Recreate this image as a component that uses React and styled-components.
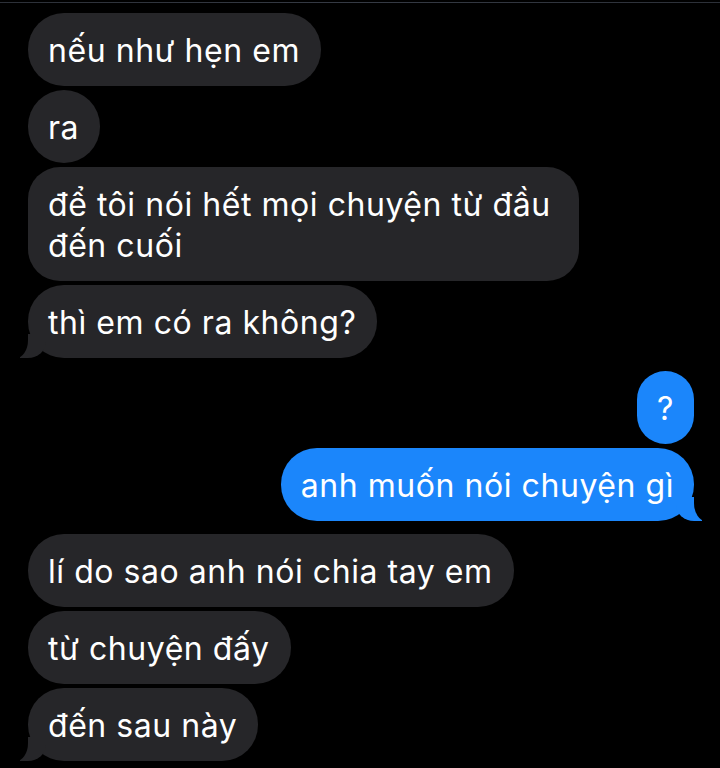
import React from "react";
import styled, { createGlobalStyle, css } from "styled-components";

const GlobalStyle = createGlobalStyle`
  html, body {
    margin: 0;
    padding: 0;
    background: #000;
  }
  body {
    font-family: Inter, "Noto Sans", "Liberation Sans", sans-serif;
    -webkit-font-smoothing: antialiased;
  }
`;

const Screen = styled.div`
  width: 720px;
  height: 768px;
  background: #000;
  overflow: hidden;
  display: flex;
  flex-direction: column;
`;

const TopEdge = styled.div`
  height: 1px;
  margin-top: 2px;
  background: linear-gradient(90deg, #2c3038, #353a44 50%, #2c3038);
`;

const Thread = styled.div`
  display: flex;
  flex-direction: column;
  gap: 13px;
  padding: 10px 26px 0 28px;
`;

const Group = styled.div`
  display: flex;
  flex-direction: column;
  align-items: ${(p) => (p.$mine ? "flex-end" : "flex-start")};
  gap: 4px;
`;

const tailLeft = css`
  &::before {
    content: "";
    position: absolute;
    left: -8px;
    bottom: 0;
    width: 26px;
    height: 24px;
    background: #262629;
    border-bottom-right-radius: 18px 16px;
  }
  &::after {
    content: "";
    position: absolute;
    left: -14px;
    bottom: 0;
    width: 14px;
    height: 26px;
    background: #000;
    border-bottom-right-radius: 12px 18px;
  }
`;

const tailRight = css`
  &::before {
    content: "";
    position: absolute;
    right: -8px;
    bottom: 0;
    width: 26px;
    height: 24px;
    background: #1b86fb;
    border-bottom-left-radius: 18px 16px;
  }
  &::after {
    content: "";
    position: absolute;
    right: -14px;
    bottom: 0;
    width: 14px;
    height: 26px;
    background: #000;
    border-bottom-left-radius: 12px 18px;
  }
`;

const Bubble = styled.div`
  position: relative;
  z-index: 0;
  max-width: 510px;
  padding: 17px 21px 15px 20px;
  border-radius: 36px;
  background: ${(p) => (p.$mine ? "#1b86fb" : "#262629")};
  color: #fff;
  font-size: 32px;
  line-height: 41px;
  letter-spacing: 0.55px;
  ${(p) => p.$multi && "border-radius: 32px;"}
  ${(p) => p.$mine && "padding: 17px 20px 15px 20px;"}
  ${(p) => p.$tail && (p.$mine ? tailRight : tailLeft)}

  span {
    position: relative;
    z-index: 1;
  }
  &::before,
  &::after {
    z-index: -1;
  }
`;

const groups = [
  {
    mine: false,
    messages: [
      "nếu như hẹn em",
      "ra",
      "để tôi nói hết mọi chuyện từ đầu đến cuối",
      "thì em có ra không?",
    ],
  },
  { mine: true, messages: ["?", "anh muốn nói chuyện gì"] },
  {
    mine: false,
    messages: ["lí do sao anh nói chia tay em", "từ chuyện đấy", "đến sau này"],
  },
];

const App = () => {
  return (
    <Screen>
      <GlobalStyle />
      <TopEdge />
      <Thread>
        {groups.map((group, gi) => (
          <Group key={gi} $mine={group.mine}>
            {group.messages.map((text, i) => (
              <Bubble
                key={i}
                $mine={group.mine}
                $multi={text.length > 36}
                $tail={i === group.messages.length - 1}
              >
                <span>{text}</span>
              </Bubble>
            ))}
          </Group>
        ))}
      </Thread>
    </Screen>
  );
};

export default App;
